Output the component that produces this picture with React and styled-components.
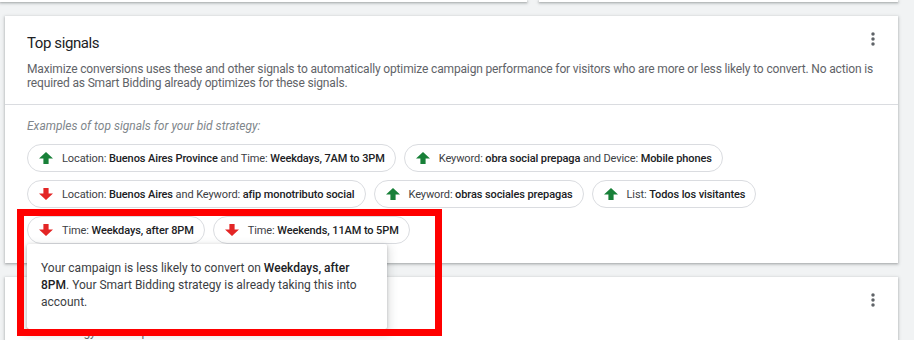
import styled, { createGlobalStyle } from "styled-components";

const GlobalStyle = createGlobalStyle`
  html, body {
    margin: 0;
    padding: 0;
    background: #f1f3f4;
    font-family: Roboto, "Liberation Sans", Arial, sans-serif;
    overflow: hidden;
  }
`;

const signals = [
  { dir: "up", parts: [["Location: ", "Buenos Aires Province"], [" and Time: ", "Weekdays, 7AM to 3PM"]] },
  { dir: "up", parts: [["Keyword: ", "obra social prepaga"], [" and Device: ", "Mobile phones"]] },
  { dir: "down", parts: [["Location: ", "Buenos Aires"], [" and Keyword: ", "afip monotributo social"]] },
  { dir: "up", parts: [["Keyword: ", "obras sociales prepagas"]] },
  { dir: "up", parts: [["List: ", "Todos los visitantes"]] },
  { dir: "down", parts: [["Time: ", "Weekdays, after 8PM"]], tip: true },
  { dir: "down", parts: [["Time: ", "Weekends, 11AM to 5PM"]] },
];

const Arrow = ({ dir }) => (
  <ArrowIcon viewBox="0 0 16 16" $dir={dir}>
    {dir === "up" ? (
      <path d="M8 2 L15 8.5 H10.6 V14 H5.4 V8.5 H1 Z" />
    ) : (
      <path d="M8 14 L15 7.5 H10.6 V2 H5.4 V7.5 H1 Z" />
    )}
  </ArrowIcon>
);

const MoreIcon = () => (
  <Kebab viewBox="0 0 24 24">
    <circle cx="12" cy="6" r="2.1" />
    <circle cx="12" cy="12" r="2.1" />
    <circle cx="12" cy="18" r="2.1" />
  </Kebab>
);

const App = () => {
  return (
    <Page>
      <GlobalStyle />
      <TopRow>
        <TopCard $w="530px" $shift="-5px" />
        <TopCard $w="361px" />
      </TopRow>

      <Card>
        <Header>
          <TitleRow>
            <Title>Top signals</Title>
            <MoreIcon />
          </TitleRow>
          <Description>
            Maximize conversions uses these and other signals to automatically optimize campaign performance
            for visitors who are more or less likely to convert. No action is required as Smart Bidding already
            optimizes for these signals.
          </Description>
        </Header>
        <Body>
          <Examples>Examples of top signals for your bid strategy:</Examples>
          <Chips>
            {signals.map((s, i) => (
              <Chip key={i}>
                <Arrow dir={s.dir} />
                <span>
                  {s.parts.map(([label, value], j) => (
                    <span key={j}>
                      {label}
                      <b>{value}</b>
                    </span>
                  ))}
                </span>
                {s.tip && (
                  <Tooltip>
                    Your campaign is less likely to convert on <b>Weekdays, after 8PM</b>. Your Smart Bidding
                    strategy is already taking this into account.
                  </Tooltip>
                )}
              </Chip>
            ))}
          </Chips>
        </Body>
      </Card>

      <Card>
        <Header>
          <TitleRow>
            <Title>Bid strategy status</Title>
            <MoreIcon />
          </TitleRow>
          <Description $gap="9px">Your strategy's recent performance.</Description>
        </Header>
      </Card>

      <Highlight />
    </Page>
  );
};

const Page = styled.div`
  position: relative;
  height: 340px;
  padding: 0 16px 0 5px;
  display: flex;
  flex-direction: column;
  gap: 14px;
  box-sizing: border-box;
`;

const TopRow = styled.div`
  display: flex;
  gap: 12px;
  height: 2px;
  flex-shrink: 0;
`;

const TopCard = styled.div`
  width: ${({ $w }) => $w};
  margin-left: ${({ $shift }) => $shift || 0};
  background: #fff;
  box-shadow: 0 1px 2px rgba(60, 64, 67, 0.3), 0 1px 3px 1px rgba(60, 64, 67, 0.15);
`;

const Card = styled.section`
  background: #fff;
  box-shadow: 0 1px 2px rgba(60, 64, 67, 0.3), 0 1px 3px 1px rgba(60, 64, 67, 0.15);
  flex-shrink: 0;
`;

const Header = styled.div`
  padding: 15px 15px 14px 22px;
  border-bottom: 1px solid #dadce0;
`;

const TitleRow = styled.div`
  display: flex;
  justify-content: space-between;
  align-items: flex-start;
`;

const Title = styled.h2`
  margin: 0;
  font-size: 15px;
  letter-spacing: -0.4px;
  line-height: 24px;
  font-weight: 400;
  color: #202124;
`;

const Kebab = styled.svg`
  width: 20px;
  height: 20px;
  margin-top: -2px;
  fill: #5f6368;
`;

const Description = styled.p`
  margin: ${({ $gap }) => $gap || "7px"} 0 0;
  padding-right: 3px;
  font-size: 12px;
  letter-spacing: -0.15px;
  line-height: 14px;
  color: #5f6368;
`;

const Body = styled.div`
  padding: 14px 18px 19px 22px;
`;

const Examples = styled.div`
  font-size: 12px;
  line-height: 14px;
  font-style: italic;
  color: #80868b;
  margin-bottom: 11px;
`;

const Chips = styled.div`
  display: flex;
  flex-wrap: wrap;
  gap: 8px;
`;

const Chip = styled.div`
  position: relative;
  display: flex;
  align-items: center;
  gap: 8px;
  height: 28px;
  box-sizing: border-box;
  padding: 0 10px;
  border: 1px solid #dadce0;
  border-radius: 14px;
  font-size: 11px;
  letter-spacing: -0.1px;
  color: #3c4043;
  white-space: nowrap;

  b {
    font-weight: 500;
    color: #202124;
  }
`;

const ArrowIcon = styled.svg`
  width: 16px;
  height: 16px;
  flex-shrink: 0;
  fill: ${({ $dir }) => ($dir === "up" ? "#188038" : "#e32525")};
`;

const Tooltip = styled.div`
  position: absolute;
  top: calc(100% + 1px);
  left: -1px;
  width: 360px;
  box-sizing: border-box;
  padding: 16px 22px 18px 14px;
  background: #fff;
  border-radius: 2px;
  box-shadow: 0 1px 3px rgba(60, 64, 67, 0.3), 0 4px 8px 3px rgba(60, 64, 67, 0.15);
  white-space: normal;
  font-size: 12px;
  letter-spacing: 0;
  line-height: 17px;
  color: #3c4043;
  z-index: 2;

  b {
    font-weight: 500;
    color: #202124;
  }
`;

const Highlight = styled.div`
  position: absolute;
  left: 17px;
  top: 209px;
  width: 425px;
  height: 127px;
  box-sizing: border-box;
  border: 7px solid #ff0000;
  z-index: 3;
  pointer-events: none;
`;

export default App;
